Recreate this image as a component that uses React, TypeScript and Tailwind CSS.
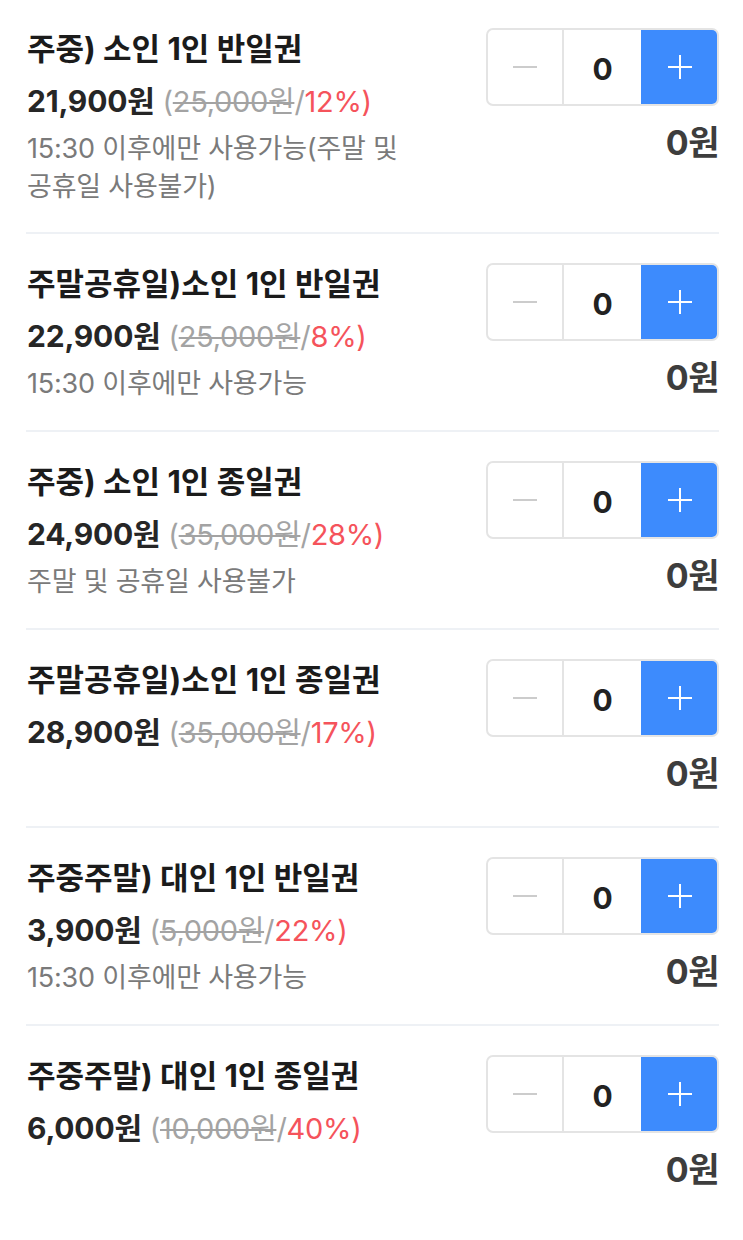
import React from "react";

type Item = {
  title: string;
  price: string;
  orig: string;
  pct: string;
  note?: string;
};

const items: Item[] = [
  { title: "주중) 소인 1인 반일권", price: "21,900원", orig: "25,000원", pct: "12%", note: "15:30 이후에만 사용가능(주말 및 공휴일 사용불가)" },
  { title: "주말공휴일)소인 1인 반일권", price: "22,900원", orig: "25,000원", pct: "8%", note: "15:30 이후에만 사용가능" },
  { title: "주중) 소인 1인 종일권", price: "24,900원", orig: "35,000원", pct: "28%", note: "주말 및 공휴일 사용불가" },
  { title: "주말공휴일)소인 1인 종일권", price: "28,900원", orig: "35,000원", pct: "17%" },
  { title: "주중주말) 대인 1인 반일권", price: "3,900원", orig: "5,000원", pct: "22%", note: "15:30 이후에만 사용가능" },
  { title: "주중주말) 대인 1인 종일권", price: "6,000원", orig: "10,000원", pct: "40%" },
];

function Stepper() {
  return (
    <div className="flex h-[78px] w-[233px] overflow-hidden rounded-[7px] border-2 border-[#e4e4e4] bg-white">
      <button className="flex w-[76px] items-center justify-center border-r-2 border-[#e4e4e4]">
        <span className="block h-[2px] w-[24px] bg-[#cccccc]" />
      </button>
      <div className="flex w-[77px] items-center justify-center pt-[4px] text-[30px] font-bold text-[#222]">0</div>
      <button className="-my-[2px] -mr-[2px] flex flex-1 items-center justify-center rounded-r-[7px] bg-[#3d8bfd]">
        <svg width="26" height="26" viewBox="0 0 26 26">
          <path d="M13 1v24M1 13h24" stroke="#fff" strokeWidth="2" />
        </svg>
      </button>
    </div>
  );
}

export default function App() {
  return (
    <div
      className="min-h-[1240px] bg-white pl-[26px] pr-[24px]"
      style={{ fontFamily: "Inter, 'Noto Sans CJK KR', sans-serif" }}
    >
      {items.map((it, i) => (
        <div
          key={i}
          className={`flex items-start justify-between ${i === 0 ? "pt-[28px] pb-[31px]" : "pt-[29px] pb-[32px]"} ${i < items.length - 1 ? "border-b-2 border-[#eef1f5]" : ""}`}
        >
          <div className="w-[420px] pl-[1px]">
            <div className="h-[42px] whitespace-nowrap text-[31px] font-bold leading-[42px] text-[#1b1b1b]">
              {it.title}
            </div>
            <div className="mt-[10px] h-[42px] whitespace-nowrap leading-[42px]">
              <span className="text-[30px] font-bold tracking-[-0.2px] text-[#262626]">{it.price}</span>
              <span className="text-[29px] tracking-[-0.3px]">
                {" "}
                <span className="text-[#a3a3a3]">(</span>
                <span className="text-[#a3a3a3] line-through decoration-[2px]">{it.orig}</span>
                <span className="text-[#a3a3a3]">/</span>
                <span className="text-[#f5535b]">{it.pct})</span>
              </span>
            </div>
            {it.note && (
              <div className="mt-[8px] -mb-[5px] w-[400px] break-keep text-[27px] leading-[38px] tracking-[-0.2px] text-[#7a7a7a]">
                {it.note}
              </div>
            )}
          </div>
          <div className="flex flex-col items-end">
            <Stepper />
            <div className="mt-[17px] h-[40px] text-[34px] font-bold leading-[40px] tracking-[-0.5px] text-[#3d3d3d]">
              0원
            </div>
          </div>
        </div>
      ))}
    </div>
  );
}
